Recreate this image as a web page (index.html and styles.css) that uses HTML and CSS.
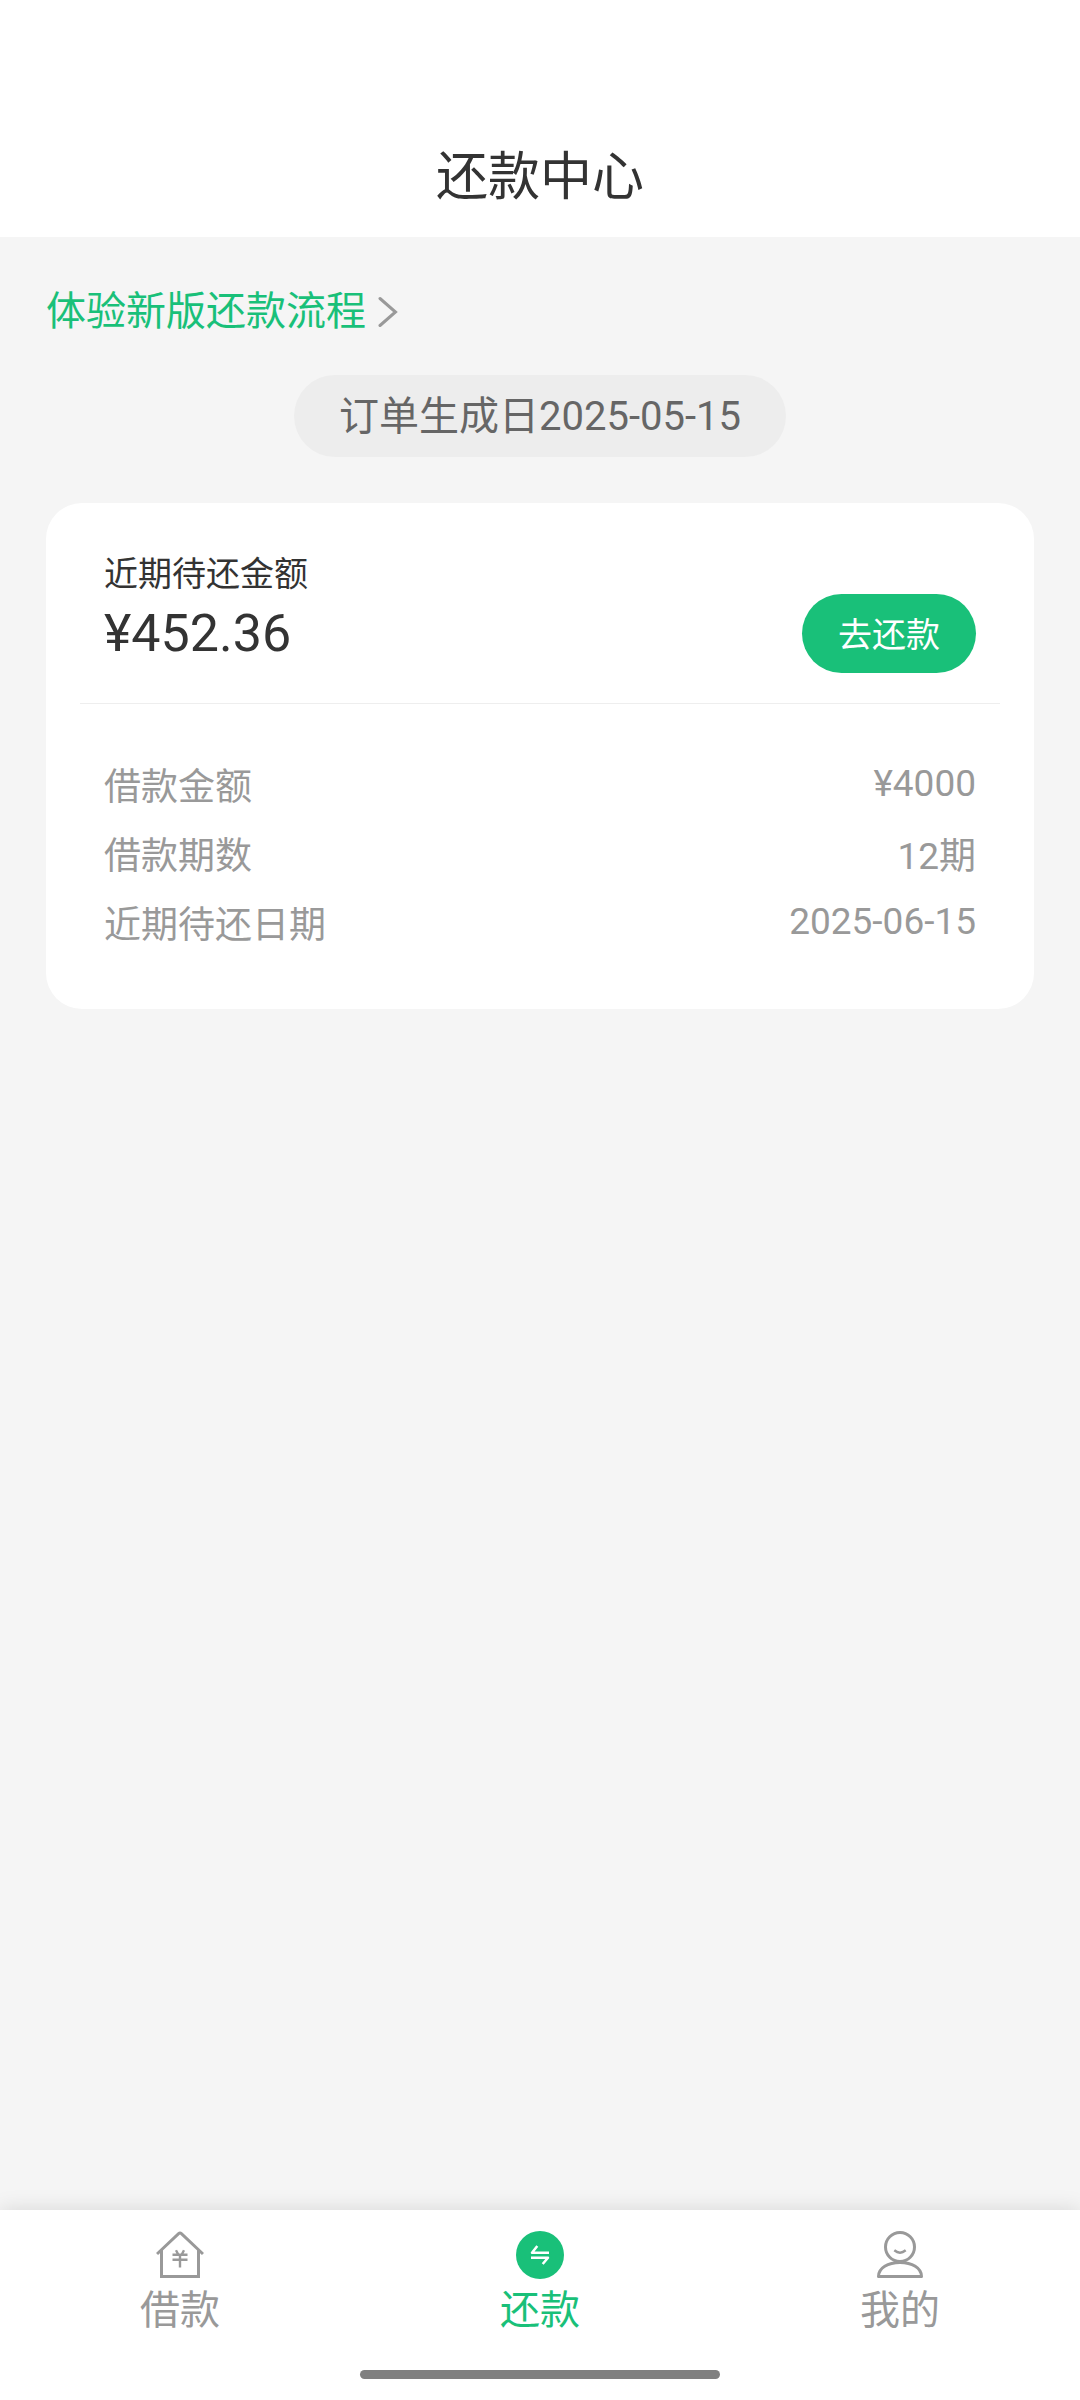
FILE: index.html
```html
<!DOCTYPE html>
<html lang="zh-CN">
<head>
<meta charset="utf-8">
<meta name="viewport" content="width=device-width, initial-scale=1">
<title>还款中心</title>
<link rel="stylesheet" href="styles.css">
</head>
<body>
<div class="page">
  <header class="header">
    <h1 class="title">还款中心</h1>
  </header>

  <main class="content">
    <a class="new-flow" href="#new">体验新版还款流程
      <svg class="chevron" viewBox="0 0 20 32" fill="none" stroke="currentColor" stroke-width="3" stroke-linecap="round" aria-hidden="true"><path d="M2 2.500 17.500 16 2 29.500"/></svg>
    </a>

    <p class="order-date">订单生成日2025-05-15</p>

    <section class="card">
      <div class="due">
        <div>
          <h2 class="due-label">近期待还金额</h2>
          <p class="due-amount">¥452.36</p>
        </div>
        <button class="pay" type="button">去还款</button>
      </div>
      <dl class="details">
        <div class="row"><dt>借款金额</dt><dd>¥4000</dd></div>
        <div class="row"><dt>借款期数</dt><dd>12期</dd></div>
        <div class="row"><dt>近期待还日期</dt><dd>2025-06-15</dd></div>
      </dl>
    </section>
  </main>

  <footer class="footer">
    <nav class="tabs">
      <a class="tab" href="#loan">
        <svg class="icon" viewBox="0 0 48 48" fill="none" stroke="currentColor" stroke-width="3" aria-hidden="true">
          <path d="M1 23 22.600 2.600Q24 1.400 25.400 2.600L47 23M5.500 19V45.500H42.500V19"/>
          <path stroke-width="2.400" d="M20 19.300 22 23M28 19.300 26 23M16.500 23.700H31.500M16.500 28.800H31.500M24 23.700V36.500"/>
        </svg>
        借款
      </a>
      <a class="tab tab-active" href="#repay" aria-current="page">
        <svg class="icon" viewBox="0 0 48 48" fill="none" aria-hidden="true">
          <circle cx="24" cy="24" r="24" fill="currentColor"/>
          <path stroke="#fff" stroke-width="2.500" stroke-linejoin="round" d="M33 21.700H16L21.300 15M15 26.700H32L26.700 33"/>
        </svg>
        还款
      </a>
      <a class="tab" href="#me">
        <svg class="icon" viewBox="0 0 48 48" fill="none" stroke="currentColor" stroke-width="3" aria-hidden="true">
          <circle cx="24" cy="16" r="14.500"/>
          <path stroke-linejoin="round" d="M2.500 45.500C2.500 37 12 31.500 24 31.500S45.500 37 45.500 45.500Z"/>
          <path stroke-width="2.400" d="M18.300 19.300Q24 24 29.700 19.300"/>
        </svg>
        我的
      </a>
    </nav>
    <div class="home-bar"></div>
  </footer>
</div>
</body>
</html>
```
FILE: styles.css
```css
* {
  box-sizing: border-box;
}

body,
h1,
h2,
p,
dl,
dd {
  margin: 0;
  font-weight: 400;
}

body {
  background: #f5f5f5;
  color: #333;
  font-family: Roboto, "Noto Sans CJK SC", sans-serif;
}

a {
  color: inherit;
  text-decoration: none;
}

.page {
  display: flex;
  flex-direction: column;
  min-height: 100vh;
}

.header {
  padding-top: 118px;
  background: #fff;
}

.title {
  font-size: 52px;
  line-height: 119px;
  text-align: center;
}

.content {
  flex: 1;
  display: flex;
  flex-direction: column;
  align-items: center;
  padding: 44px 46px;
}

.new-flow {
  display: flex;
  align-items: center;
  align-self: flex-start;
  gap: 12px;
  color: #19c079;
  font-size: 40px;
  line-height: 62px;
}

.chevron {
  width: 20px;
  height: 32px;
  color: #999;
}

.order-date {
  margin-top: 32px;
  padding: 2px 45px 0;
  border-radius: 41px;
  background: #ededed;
  color: #666;
  font-size: 40px;
  line-height: 80px;
}

.card {
  align-self: stretch;
  margin-top: 46px;
  padding: 44px 34px 53px;
  border-radius: 36px;
  background: #fff;
}

.due {
  display: flex;
  justify-content: space-between;
  align-items: flex-end;
  padding: 0 24px 30px;
  border-bottom: 1px solid #eee;
}

.due-label {
  font-size: 34px;
  line-height: 54px;
}

.due-amount {
  padding-bottom: 6px;
  font-size: 52px;
  line-height: 66px;
}

.pay {
  padding: 3px 36px 0;
  border: 0;
  border-radius: 40px;
  background: #19c079;
  color: #fff;
  font-family: inherit;
  font-size: 34px;
  line-height: 76px;
}

.details {
  padding: 45px 24px 0;
  color: #999;
  font-size: 37px;
}

.row {
  display: flex;
  justify-content: space-between;
  align-items: center;
  height: 69px;
}

.footer {
  display: flex;
  flex-direction: column;
  align-items: center;
  padding: 21px 0;
  background: #fff;
  box-shadow: 0 0 20px rgba(0, 0, 0, 0.13);
}

.tabs {
  display: grid;
  grid-template-columns: repeat(3, 1fr);
  width: 100%;
}

.tab {
  display: flex;
  flex-direction: column;
  align-items: center;
  color: #999;
  font-size: 40px;
  line-height: 64px;
}

.tab-active {
  color: #19c079;
}

.icon {
  width: 48px;
  height: 48px;
}

.home-bar {
  width: 33.333%;
  height: 9px;
  margin-top: 27px;
  border-radius: 5px;
  background: #808080;
}
```
